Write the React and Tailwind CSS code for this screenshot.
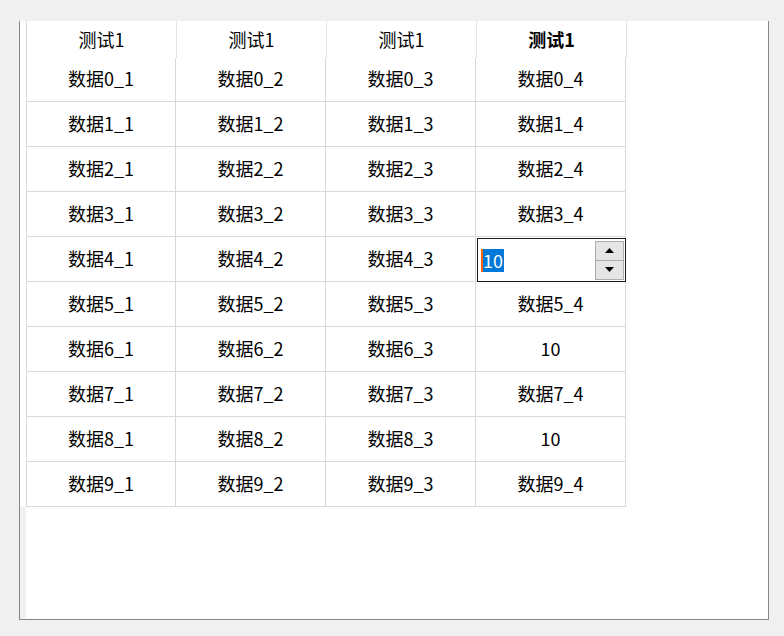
import React from 'react'

const headers = ['测试1', '测试1', '测试1', '测试1']

const rows = Array.from({ length: 10 }, (_, r) => [
  `数据${r}_1`,
  `数据${r}_2`,
  `数据${r}_3`,
  r === 6 || r === 8 ? '10' : `数据${r}_4`,
])

const SpinEditor = () => (
  <div className="absolute left-[1px] top-[1px] right-[-1px] bottom-[-1px] border border-[#1a1a1a] bg-white flex items-center">
    {/* 选中的文本 */}
    <div className="ml-[3px] flex items-center h-[23px] bg-[#0078d7] text-white pr-[1px]">
      <span className="w-[2px] h-[23px] bg-[#f7630c]" />
      <span className="leading-[23px]">10</span>
    </div>
    <div className="ml-auto mr-[1px] flex flex-col w-[29px] h-[39px]">
      <button className="h-[20px] bg-[#e5e5e5] border border-[#adadad] flex items-center justify-center">
        <svg width="9" height="5" viewBox="0 0 9 5"><path d="M4.5 0L9 5H0z" fill="#000" /></svg>
      </button>
      <button className="h-[19px] bg-[#e5e5e5] border border-t-0 border-[#adadad] flex items-center justify-center">
        <svg width="9" height="5" viewBox="0 0 9 5"><path d="M0 0H9L4.5 5z" fill="#000" /></svg>
      </button>
    </div>
  </div>
)

export default function App() {
  return (
    <div
      className="w-[784px] h-[636px] bg-[#f0f0f0] pl-[19px] pt-[21px] text-black text-[18px]"
      style={{ fontFamily: '"Noto Sans CJK SC", "Noto Sans", sans-serif' }}
    >
      <div className="w-[750px] h-[599px] bg-white border-x border-b border-[#828790] flex flex-col">
        {/* 表头 */}
        <div className="flex h-[37px] shrink-0">
          <div className="w-[7px] border-r border-[#d9d9d9]" />
          {headers.map((h, i) => (
            <div
              key={i}
              className={`w-[150px] border-r border-[#e3e3e3] flex items-center justify-center ${
                i === 3 ? 'font-bold' : ''
              }`}
            >
              {h}
            </div>
          ))}
        </div>

        {/* 数据行 */}
        {rows.map((row, r) => (
          <div key={r} className={`flex shrink-0 ${r === 0 ? 'h-[44px]' : 'h-[45px]'}`}>
            <div className="w-[7px] border-r border-[#d9d9d9]" />
            {row.map((cell, c) => (
              <div
                key={c}
                className={`${c === 0 ? 'w-[149px]' : 'w-[150px]'} relative border-r border-b border-[#d9d9d9] flex items-center justify-center pb-[2px]`}
              >
                {r === 4 && c === 3 ? <SpinEditor /> : cell}
              </div>
            ))}
          </div>
        ))}

        {/* 空白区域 */}
        <div className="flex-1 flex">
          <div className="w-[6px] bg-[#f0f0f0]" />
        </div>
      </div>
    </div>
  )
}
